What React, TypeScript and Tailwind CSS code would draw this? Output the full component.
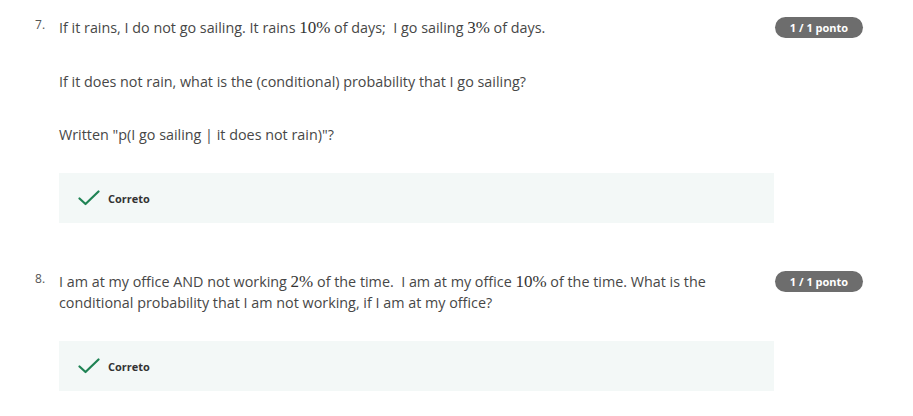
import React from "react";

// pequeño componente para los números en fórmula (MathJax)
const M = ({ children }: { children: React.ReactNode }) => (
  <span className="font-['Liberation_Serif',serif] text-[17px] leading-none text-[#333]">{children}</span>
);

const Badge = () => (
  <div className="ml-px flex h-[21px] w-[88px] shrink-0 items-center justify-center rounded-full bg-[#6d6d6d] text-[11px] font-bold text-white">
    1 / 1 ponto
  </div>
);

const Correct = () => (
  <div className="flex h-[50px] w-[715px] items-center bg-[#f3f8f7] pl-[19px]">
    <svg width="22" height="16" viewBox="0 0 22 16" fill="none">
      <path d="M1.5 8.5 L7.5 14 L20.5 1.5" stroke="#1f8354" strokeWidth="2.2" strokeLinecap="round" strokeLinejoin="round" />
    </svg>
    <span className="ml-[8px] text-[11px] font-bold text-[#333]">Correto</span>
  </div>
);

type QuestionProps = {
  num: number;
  children: React.ReactNode;
};

const Question = ({ num, children }: QuestionProps) => (
  <div className="flex">
    <div className="mt-[-3px] w-[24px] shrink-0 text-[12px] leading-[21px] text-[#555]">{num}.</div>
    <div className="w-[715px] shrink-0">{children}</div>
    <Badge />
  </div>
);

export default function App() {
  return (
    <div className="min-h-screen bg-white pl-[35px] pt-[17px] font-['Open_Sans',sans-serif] text-[14.35px] leading-[21px] text-[#474747]">
      <Question num={7}>
        <p>
          If it rains, I do not go sailing. It rains <M>10%</M> of days;&nbsp; I go sailing <M>3%</M> of days.
        </p>
        <p className="mt-[33px]">If it does not rain, what is the (conditional) probability that I go sailing?</p>
        <p className="mt-[32px]">Written "p(I go sailing | it does not rain)"?</p>
        <div className="mt-[28px]">
          <Correct />
        </div>
      </Question>

      <div className="mt-[48px]">
        <Question num={8}>
          <p>
            I am at my office AND not working <M>2%</M> of the time.&nbsp; I am at my office <M>10%</M> of the time. What is the
            conditional probability that I am not working, if I am at my office?
          </p>
          <div className="mt-[28px]">
            <Correct />
          </div>
        </Question>
      </div>
    </div>
  );
}
